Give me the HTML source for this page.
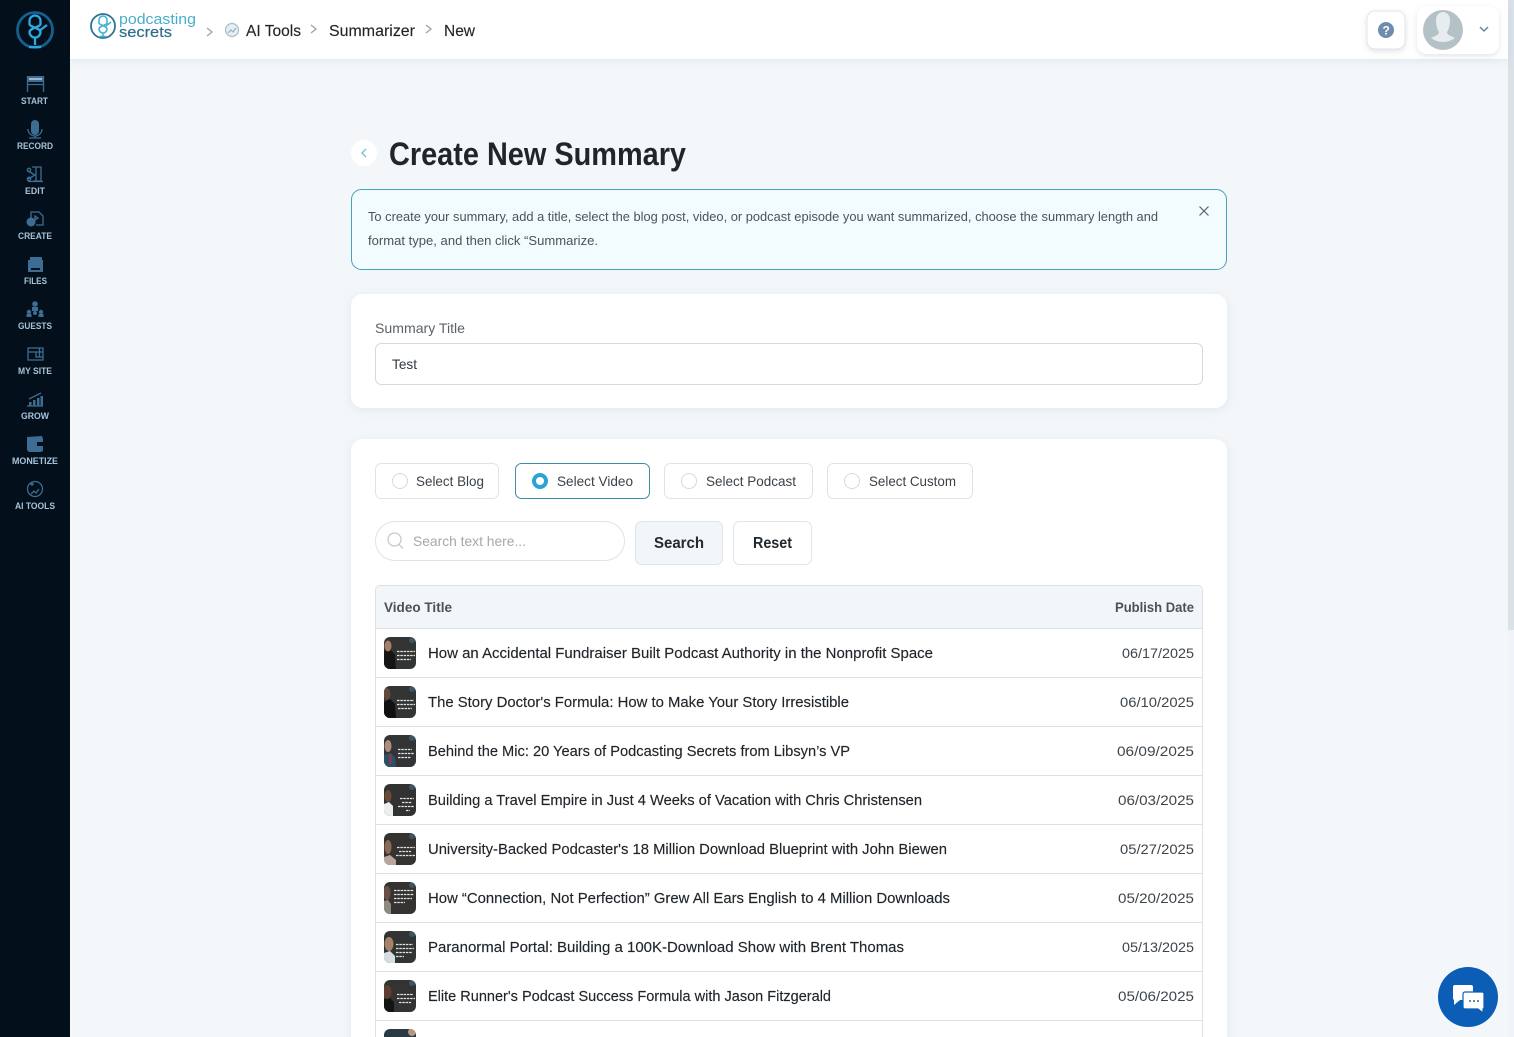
<!DOCTYPE html>
<html lang="en"><head><meta charset="utf-8"><title>Create New Summary</title>
<style>
html,body{margin:0;padding:0;width:1514px;height:1037px;overflow:hidden;background:#f3f7fa}
svg{display:block;position:absolute;left:0;top:0}
text{font-family:"Liberation Sans",sans-serif;fill:#1f252a;font-size:15px}
.nav text{fill:#a6c3da;font-size:9px;font-weight:bold;text-anchor:start}
.nav .ic{fill:#3d6d92;stroke:none}
.nav .st{fill:none;stroke:#3d6d92;stroke-width:1.300}
.d text{fill:#3d454c;font-size:14px}
.t{fill:none;stroke:#e4e4e4;stroke-width:1.200;stroke-dasharray:2.500 .8}
.r text{stroke:#1f252a;stroke-width:.15}
</style></head><body>
<svg width="1514" height="1037" viewBox="0 0 1514 1037" xmlns="http://www.w3.org/2000/svg">
<defs>
<filter id="s1" x="-5%" y="-20%" width="110%" height="140%"><feDropShadow dx="0" dy="2" stdDeviation="5" flood-color="#8aa0b4" flood-opacity=".18"/></filter>
<filter id="s2" x="-30%" y="-30%" width="160%" height="170%"><feDropShadow dx="0" dy="2" stdDeviation="3" flood-color="#7a8a9a" flood-opacity=".22"/></filter>
<clipPath id="c1"><rect x="384" y="637" width="32" height="32" rx="6"/></clipPath>
<clipPath id="c2"><rect x="384" y="686" width="32" height="32" rx="6"/></clipPath>
<clipPath id="c3"><rect x="384" y="735" width="32" height="32" rx="6"/></clipPath>
<clipPath id="c4"><rect x="384" y="784" width="32" height="32" rx="6"/></clipPath>
<clipPath id="c5"><rect x="384" y="833" width="32" height="32" rx="6"/></clipPath>
<clipPath id="c6"><rect x="384" y="882" width="32" height="32" rx="6"/></clipPath>
<clipPath id="c7"><rect x="384" y="931" width="32" height="32" rx="6"/></clipPath>
<clipPath id="c8"><rect x="384" y="980" width="32" height="32" rx="6"/></clipPath>
<clipPath id="c9"><rect x="384" y="1029" width="32" height="32" rx="6"/></clipPath>
</defs>

<rect width="1514" height="1037" fill="#f3f7fa"/>
<rect x="1508" y="0" width="6" height="1037" fill="#f1f3fb"/>
<rect x="1508" y="0" width="6" height="630" fill="#dbe1e8"/>

<!-- header -->
<rect x="70" y="0" width="1438" height="59" fill="#fff" filter="url(#s1)"/>
<rect x="70" y="59" width="1438" height="1" fill="#e6ebef"/>
<circle cx="103" cy="26" r="12" fill="none" stroke="#2f7391" stroke-width="1.800"/>
<path d="M99 20a4 4 0 0 1 8 0v3c0 2-8 3-8 6a4 4 0 0 0 8 0c0-3-8-4-8-6zM103 33v3M99.500 36.500h7M106 26l5-4" fill="none" stroke="#43b3d3" stroke-width="1.600"/>
<text x="119" y="24" textLength="77" lengthAdjust="spacingAndGlyphs" style="fill:#47afcd;font-size:15px">podcasting</text>
<text x="119" y="37" textLength="53" lengthAdjust="spacingAndGlyphs" style="fill:#2f6f8c;font-size:15px;stroke:#2f6f8c;stroke-width:.2">secrets</text>
<path d="M207 28l5 4-5 4M311 25l5 4-5 4M426 25l5 4-5 4" fill="none" stroke="#9aa4ac" stroke-width="1.300"/>
<circle cx="232" cy="30" r="6.500" fill="#e6eef3" stroke="#a9bdca" stroke-width="1.200"/>
<path d="M228 33l3-3 2 2 3-4" fill="none" stroke="#8fb3c7" stroke-width="1.200"/>
<g class="r">
<text x="246" y="36" textLength="55" lengthAdjust="spacingAndGlyphs" style="font-size:16px">AI Tools</text>
<text x="329" y="36" textLength="86" lengthAdjust="spacingAndGlyphs" style="font-size:16px">Summarizer</text>
<text x="444" y="36" textLength="31" lengthAdjust="spacingAndGlyphs" style="font-size:16px">New</text>
</g>

<rect x="1367" y="11" width="38" height="38" rx="8" fill="#fff" stroke="#e2e6ea" filter="url(#s2)"/>
<circle cx="1386" cy="30" r="8" fill="#6f8cad"/>
<text x="1382.500" y="34.500" style="fill:#fff;font-size:12px;font-weight:bold">?</text>
<rect x="1417" y="6" width="82" height="48" rx="10" fill="#fff" filter="url(#s2)"/>
<circle cx="1443" cy="30" r="20" fill="#b4c2c7"/>
<path d="M1436 20a7 8 0 0 1 14 0c0 5-1 9-3 12 0 3 4 4 8 6a20 20 0 0 1-24 0c4-2 8-3 8-6-2-3-3-7-3-12z" fill="#e7edef"/>
<path d="M1480 27l4 4 4-4" fill="none" stroke="#6f8796" stroke-width="1.500"/>

<!-- sidebar -->
<rect x="0" y="0" width="70" height="1037" fill="#03101b"/>
<g class="nav">
<circle cx="35" cy="30" r="17.500" fill="none" stroke="#14608f" stroke-width="2.800"/>
<path d="M29.500 21a5.500 5.500 0 0 1 11 0v3c0 3-11 4-11 8a5.500 5.500 0 0 0 11 0c0-4-11-5-11-8z" fill="none" stroke="#2fa8e0" stroke-width="2.300"/>
<path d="M35 38v7M29 47h12M39 31l8-6" fill="none" stroke="#2fa8e0" stroke-width="2.300"/>

<!-- START -->
<rect class="ic" x="27" y="76" width="17" height="6"/><path class="st" d="M27.500 76v16M43.500 76v16M27 84.500h17"/><rect x="29" y="78" width="13" height="2" fill="#9bb7cc"/>
<text x="21" y="104" textLength="27" lengthAdjust="spacingAndGlyphs">START</text>
<!-- RECORD -->
<rect class="ic" x="31" y="120" width="8" height="15" rx="4"/><path class="st" d="M28 129a7 7 0 0 0 14 0M35 136v2M29 138h12"/>
<text x="17" y="149" textLength="36" lengthAdjust="spacingAndGlyphs">RECORD</text>
<!-- EDIT -->
<path class="st" d="M32 167h9v14H33M36 167v14M28 181.500h15M28 171l7 4M28 179l7-4"/><circle class="st" cx="29" cy="170" r="1.700"/><circle class="st" cx="29" cy="179" r="1.700"/>
<text x="25" y="194" textLength="20" lengthAdjust="spacingAndGlyphs">EDIT</text>
<!-- CREATE -->
<path class="st" d="M31 218v-6h8l4 4v9H36"/><circle class="ic" cx="31" cy="222" r="4.500"/><path class="st" d="M35 216l3 2-3 2z"/>
<text x="18" y="239" textLength="34" lengthAdjust="spacingAndGlyphs">CREATE</text>
<!-- FILES -->
<path class="ic" d="M28 260h2v-3h12v3h1v12H28z"/><rect x="31" y="268" width="9" height="2" fill="#03101b"/>
<text x="24" y="284" textLength="23" lengthAdjust="spacingAndGlyphs">FILES</text>
<!-- GUESTS -->
<circle class="ic" cx="35" cy="304" r="2.800"/><rect class="ic" x="32" y="307" width="6" height="4"/><circle class="ic" cx="29" cy="312" r="2.200"/><circle class="ic" cx="41" cy="312" r="2.200"/><rect class="ic" x="26.500" y="314" width="5" height="3"/><rect class="ic" x="38.500" y="314" width="5" height="3"/><circle class="ic" cx="35" cy="313" r="2"/>
<text x="18" y="329" textLength="34" lengthAdjust="spacingAndGlyphs">GUESTS</text>
<!-- MY SITE -->
<path class="st" d="M28 348h15v12H28zM28 352h15"/><path class="st" d="M36 352v5h7M39.500 348v9"/>
<text x="18" y="374" textLength="34" lengthAdjust="spacingAndGlyphs">MY SITE</text>
<!-- GROW -->
<path class="st" d="M27 406h16M29 399l12-6"/><rect class="ic" x="29" y="402" width="2.500" height="4"/><rect class="ic" x="33" y="400" width="2.500" height="6"/><rect class="ic" x="37" y="398" width="2.500" height="8"/><rect class="ic" x="40.500" y="396" width="2.500" height="10"/>
<text x="21" y="419" textLength="28" lengthAdjust="spacingAndGlyphs">GROW</text>
<!-- MONETIZE -->
<path class="ic" d="M27 437l15-1 1 3v12l-2 1H29l-2-2z"/><rect x="37" y="442" width="6" height="4" fill="#03101b"/>
<text x="12" y="464" textLength="46" lengthAdjust="spacingAndGlyphs">MONETIZE</text>
<!-- AI TOOLS -->
<circle class="st" cx="35" cy="489" r="7.500"/><path class="st" d="M31 494l3-3 2 2 3-4M30 484h4M32 482v4"/>
<text x="15" y="509" textLength="40" lengthAdjust="spacingAndGlyphs">AI TOOLS</text>
</g>

<!-- heading -->
<circle cx="364" cy="153" r="13" fill="#fff"/>
<path d="M366 149l-4 4 4 4" fill="none" stroke="#62b8c9" stroke-width="1.200"/>
<text x="389" y="165" textLength="297" lengthAdjust="spacingAndGlyphs" style="font-size:32px;font-weight:bold;fill:#1e262c">Create New Summary</text>

<!-- alert -->
<rect x="351.500" y="189.500" width="875" height="80" rx="10" fill="#f2fbfe" stroke="#46a3b5"/>
<text x="368" y="221" textLength="790" lengthAdjust="spacingAndGlyphs" style="font-size:13px;fill:#4b5359">To create your summary, add a title, select the blog post, video, or podcast episode you want summarized, choose the summary length and</text>
<text x="368" y="245" textLength="230" lengthAdjust="spacingAndGlyphs" style="font-size:13px;fill:#4b5359">format type, and then click “Summarize.</text>
<path d="M1199.500 206.500l9 9M1208.500 206.500l-9 9" stroke="#56626a" stroke-width="1.200" fill="none"/>

<!-- title card -->
<rect x="351" y="294" width="876" height="114" rx="12" fill="#fff" filter="url(#s1)"/>
<text x="375" y="333" textLength="90" lengthAdjust="spacingAndGlyphs" style="font-size:14px;fill:#5a6268">Summary Title</text>
<rect x="375.500" y="343.500" width="827" height="41" rx="6" fill="#fff" stroke="#d5d9dd"/>
<text x="392" y="369" textLength="25" lengthAdjust="spacingAndGlyphs" style="font-size:14px;fill:#30373c">Test</text>

<!-- main card -->
<rect x="351" y="439" width="876" height="640" rx="12" fill="#fff" filter="url(#s1)"/>
<rect x="375.500" y="463.500" width="123" height="35" rx="6" fill="#fff" stroke="#dfe3e6"/>
<rect x="515.500" y="463.500" width="134" height="35" rx="6" fill="#fff" stroke="#3c8ea8"/>
<rect x="664.500" y="463.500" width="148" height="35" rx="6" fill="#fff" stroke="#dfe3e6"/>
<rect x="827.500" y="463.500" width="145" height="35" rx="6" fill="#fff" stroke="#dfe3e6"/>
<circle cx="400" cy="481" r="7.500" fill="#fff" stroke="#d5dadd"/>
<circle cx="540" cy="481" r="6" fill="#fff" stroke="#2ba3d4" stroke-width="4"/>
<circle cx="689" cy="481" r="7.500" fill="#fff" stroke="#d5dadd"/>
<circle cx="852" cy="481" r="7.500" fill="#fff" stroke="#d5dadd"/>
<text x="416" y="486" textLength="68" lengthAdjust="spacingAndGlyphs" style="font-size:14px;fill:#3b4248">Select Blog</text>
<text x="557" y="486" textLength="76" lengthAdjust="spacingAndGlyphs" style="font-size:14px;fill:#3b4248">Select Video</text>
<text x="706" y="486" textLength="90" lengthAdjust="spacingAndGlyphs" style="font-size:14px;fill:#3b4248">Select Podcast</text>
<text x="869" y="486" textLength="87" lengthAdjust="spacingAndGlyphs" style="font-size:14px;fill:#3b4248">Select Custom</text>

<rect x="375.500" y="521.500" width="249" height="39" rx="19.500" fill="#fff" stroke="#dfe3e6"/>
<circle cx="394.500" cy="539.500" r="6.500" fill="none" stroke="#c3cacf" stroke-width="1.300"/>
<path d="M399 544.500l4 4" stroke="#c3cacf" stroke-width="1.300"/>
<text x="413" y="546" textLength="113" lengthAdjust="spacingAndGlyphs" style="font-size:14px;fill:#a3a9ae">Search text here...</text>
<rect x="635.500" y="521.500" width="87" height="43" rx="6" fill="#f3f6f9" stroke="#e0e5e9"/>
<text x="654" y="548" textLength="50" lengthAdjust="spacingAndGlyphs" style="font-size:16px;font-weight:bold;fill:#23292e">Search</text>
<rect x="733.500" y="521.500" width="78" height="43" rx="6" fill="#fff" stroke="#e0e5e9"/>
<text x="753" y="548" textLength="39" lengthAdjust="spacingAndGlyphs" style="font-size:16px;font-weight:bold;fill:#23292e">Reset</text>

<!-- table -->
<path d="M375.500 1045V590a4.500 4.500 0 0 1 4.500-4.500h818a4.500 4.500 0 0 1 4.500 4.500v455" fill="#fff" stroke="#dde1e5"/>
<path d="M376 628V590a4 4 0 0 1 4-4h818a4 4 0 0 1 4 4v38z" fill="#f3f6f9"/>
<path d="M375 628.500h828M375 677.500h828M375 726.500h828M375 775.500h828M375 824.500h828M375 873.500h828M375 922.500h828M375 971.500h828M375 1020.500h828" stroke="#dde1e5"/>
<text x="384" y="612" textLength="68" lengthAdjust="spacingAndGlyphs" style="font-size:14px;font-weight:bold;fill:#4a5258">Video Title</text>
<text x="1115" y="612" textLength="79" lengthAdjust="spacingAndGlyphs" style="font-size:14px;font-weight:bold;fill:#4a5258">Publish Date</text>

<!-- thumbs -->
<g clip-path="url(#c1)"><rect x="384" y="637" width="32" height="32" fill="#333434"/><path d="M384 651l6-2 5 6 1 14h-12z" fill="#161514"/><ellipse cx="388" cy="646" rx="3.500" ry="5.500" fill="#a57f66"/><path class="t" d="M397 651.500h18M397 655.500h18M397 659.500h14"/><circle cx="412" cy="640" r="3" fill="#3c5563"/></g>
<g clip-path="url(#c2)"><rect x="384" y="686" width="32" height="32" fill="#333434"/><path d="M384 702l6-3 5 5 1 14h-12z" fill="#111"/><ellipse cx="387" cy="694" rx="3.500" ry="6" fill="#5f4a3d"/><path class="t" d="M397 700.500h17M397 704.500h18M398 708.500h14"/><circle cx="412" cy="689" r="3" fill="#3c5563"/></g>
<g clip-path="url(#c3)"><rect x="384" y="735" width="32" height="32" fill="#333435"/><path d="M384 755l6-2 5 4 1 10h-12z" fill="#2c4f68"/><ellipse cx="388" cy="746" rx="3.500" ry="6" fill="#b08e7c"/><rect x="389" y="754" width="2.500" height="10" fill="#8a3a44"/><path class="t" d="M398 749.500h14M398 753.500h16M398 757.500h13"/><circle cx="412" cy="738" r="3" fill="#3c5563"/></g>
<g clip-path="url(#c4)"><rect x="384" y="784" width="32" height="32" fill="#333232"/><path d="M384 804l5-2 4 4v10h-9z" fill="#eee"/><ellipse cx="388" cy="796" rx="3.500" ry="6" fill="#6b4b38"/><path class="t" d="M400 798.500h14M402 802.500h10M398 806.500h16M406 810.500h4"/><circle cx="412" cy="787" r="3" fill="#3c5563"/></g>
<g clip-path="url(#c5)"><rect x="384" y="833" width="32" height="32" fill="#353332"/><path d="M384 857l6-2 6 5v5h-12z" fill="#b8a69c"/><ellipse cx="388" cy="847" rx="3.500" ry="7" fill="#8a6a56"/><path class="t" d="M397 847.500h18M399 851.500h12M396 855.500h19"/><circle cx="412" cy="836" r="3" fill="#3c5563"/></g>
<g clip-path="url(#c6)"><rect x="384" y="882" width="32" height="32" fill="#343332"/><path d="M384 901l4-1 3 4v10h-7z" fill="#8f8a80"/><ellipse cx="387" cy="893" rx="3.500" ry="7" fill="#6b5143"/><path class="t" d="M394 890.500h20M394 894.500h20M394 898.500h18M394 902.500h11"/><circle cx="412" cy="885" r="3" fill="#3c5563"/></g>
<g clip-path="url(#c7)"><rect x="384" y="931" width="32" height="32" fill="#323333"/><path d="M384 953l6-2 5 5v7h-11z" fill="#d3dde2"/><ellipse cx="389" cy="944" rx="4.500" ry="7" fill="#a7826c"/><path class="t" d="M396 944.500h17M396 948.500h18M396 952.500h16M396 956.500h8"/><circle cx="412" cy="934" r="3" fill="#3c5563"/></g>
<g clip-path="url(#c8)"><rect x="384" y="980" width="32" height="32" fill="#343333"/><path d="M384 999l5-2 5 5v10h-10z" fill="#141414"/><ellipse cx="387" cy="992" rx="4.500" ry="7" fill="#5e3d32"/><path class="t" d="M397 994.500h16M397 998.500h18M399 1002.500h12"/><circle cx="412" cy="983" r="3" fill="#3c5563"/></g>
<g clip-path="url(#c9)"><rect x="384" y="1029" width="32" height="32" fill="#2a3a44"/><circle cx="412" cy="1032" r="4" fill="#b5967f"/></g>

<!-- rows -->
<g class="r">
<text x="428" y="658" textLength="505" lengthAdjust="spacingAndGlyphs">How an Accidental Fundraiser Built Podcast Authority in the Nonprofit Space</text>
<text x="428" y="707" textLength="421" lengthAdjust="spacingAndGlyphs">The Story Doctor's Formula: How to Make Your Story Irresistible</text>
<text x="428" y="756" textLength="422" lengthAdjust="spacingAndGlyphs">Behind the Mic: 20 Years of Podcasting Secrets from Libsyn’s VP</text>
<text x="428" y="805" textLength="494" lengthAdjust="spacingAndGlyphs">Building a Travel Empire in Just 4 Weeks of Vacation with Chris Christensen</text>
<text x="428" y="854" textLength="519" lengthAdjust="spacingAndGlyphs">University-Backed Podcaster's 18 Million Download Blueprint with John Biewen</text>
<text x="428" y="903" textLength="522" lengthAdjust="spacingAndGlyphs">How “Connection, Not Perfection” Grew All Ears English to 4 Million Downloads</text>
<text x="428" y="952" textLength="476" lengthAdjust="spacingAndGlyphs">Paranormal Portal: Building a 100K-Download Show with Brent Thomas</text>
<text x="428" y="1001" textLength="403" lengthAdjust="spacingAndGlyphs">Elite Runner's Podcast Success Formula with Jason Fitzgerald</text>
</g>
<g class="d">
<text x="1122" y="658" textLength="72" lengthAdjust="spacingAndGlyphs">06/17/2025</text>
<text x="1120" y="707" textLength="74" lengthAdjust="spacingAndGlyphs">06/10/2025</text>
<text x="1117" y="756" textLength="77" lengthAdjust="spacingAndGlyphs">06/09/2025</text>
<text x="1118" y="805" textLength="76" lengthAdjust="spacingAndGlyphs">06/03/2025</text>
<text x="1120" y="854" textLength="74" lengthAdjust="spacingAndGlyphs">05/27/2025</text>
<text x="1118" y="903" textLength="76" lengthAdjust="spacingAndGlyphs">05/20/2025</text>
<text x="1122" y="952" textLength="72" lengthAdjust="spacingAndGlyphs">05/13/2025</text>
<text x="1118" y="1001" textLength="76" lengthAdjust="spacingAndGlyphs">05/06/2025</text>
</g>

<!-- chat -->
<circle cx="1468" cy="997" r="30" fill="#0b5db5"/>
<path d="M1455 985h16a2 2 0 0 1 2 2v11a2 2 0 0 1-2 2h-11l-6 5 0-5a2 2 0 0 1-1-2v-11a2 2 0 0 1 2-2z" fill="#fff"/>
<path d="M1465 992h17a2 2 0 0 1 2 2v13a2 2 0 0 1-1 2v4l-5-4h-13a2 2 0 0 1-2-2v-13a2 2 0 0 1 2-2z" fill="#fff" stroke="#0b5db5" stroke-width="1.200"/>
<path d="M1469 1001h2M1473 1001h2M1477 1001h2" stroke="#33618f" stroke-width="1.400"/>
</svg>
</body></html>
